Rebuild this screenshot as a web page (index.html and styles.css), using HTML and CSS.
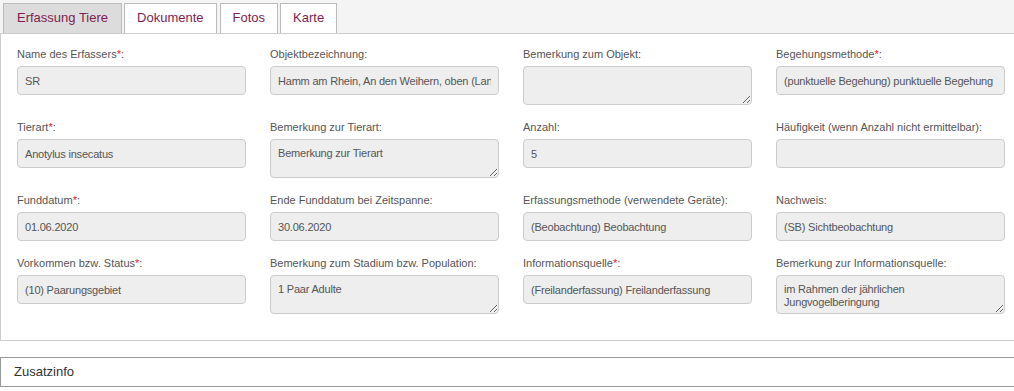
FILE: index.html
```html
<!DOCTYPE html>
<html lang="de">
<head>
    <meta charset="UTF-8">
    <meta name="viewport" content="width=device-width, initial-scale=1.0">
    <title>Erfassung Tiere</title>
    <link rel="stylesheet" href="styles.css">
</head>
<body>
    <div class="tabs">
        <div class="tab active">Erfassung Tiere</div>
        <div class="tab">Dokumente</div>
        <div class="tab tab-wide">Fotos</div>
        <div class="tab">Karte</div>
    </div>

    <div class="panel">
        <form class="grid">
            <div class="field">
                <label>Name des Erfassers<span class="req">*</span>:</label>
                <input type="text" value="SR" readonly>
            </div>
            <div class="field">
                <label>Objektbezeichnung:</label>
                <input type="text" value="Hamm am Rhein, An den Weihern, oben (Landkreis Alzey-Worms)" readonly>
            </div>
            <div class="field">
                <label>Bemerkung zum Objekt:</label>
                <textarea readonly></textarea>
            </div>
            <div class="field">
                <label>Begehungsmethode<span class="req">*</span>:</label>
                <input type="text" value="(punktuelle Begehung) punktuelle Begehung" readonly>
            </div>

            <div class="field">
                <label>Tierart<span class="req">*</span>:</label>
                <input type="text" value="Anotylus insecatus" readonly>
            </div>
            <div class="field">
                <label>Bemerkung zur Tierart:</label>
                <textarea readonly>Bemerkung zur Tierart</textarea>
            </div>
            <div class="field">
                <label>Anzahl:</label>
                <input type="text" value="5" readonly>
            </div>
            <div class="field">
                <label>Häufigkeit (wenn Anzahl nicht ermittelbar):</label>
                <input type="text" value="" readonly>
            </div>

            <div class="field">
                <label>Funddatum<span class="req">*</span>:</label>
                <input type="text" value="01.06.2020" readonly>
            </div>
            <div class="field">
                <label>Ende Funddatum bei Zeitspanne:</label>
                <input type="text" value="30.06.2020" readonly>
            </div>
            <div class="field">
                <label>Erfassungsmethode (verwendete Geräte):</label>
                <input type="text" value="(Beobachtung) Beobachtung" readonly>
            </div>
            <div class="field">
                <label>Nachweis:</label>
                <input type="text" value="(SB) Sichtbeobachtung" readonly>
            </div>

            <div class="field">
                <label>Vorkommen bzw. Status<span class="req">*</span>:</label>
                <input type="text" value="(10) Paarungsgebiet" readonly>
            </div>
            <div class="field">
                <label>Bemerkung zum Stadium bzw. Population:</label>
                <textarea readonly>1 Paar Adulte</textarea>
            </div>
            <div class="field">
                <label>Informationsquelle<span class="req">*</span>:</label>
                <input type="text" value="(Freilanderfassung) Freilanderfassung" readonly>
            </div>
            <div class="field">
                <label>Bemerkung zur Informationsquelle:</label>
                <textarea readonly>im Rahmen der jährlichen Jungvogelberingung</textarea>
            </div>
        </form>
    </div>

    <div class="section">Zusatzinfo</div>
</body>
</html>
```

FILE: styles.css
```css
body {
    margin: 0;
    font-family: "Liberation Sans", Arial, sans-serif;
    background: #fff;
}
.tabs {
    display: flex;
    gap: 2px;
    padding: 3px 0 0 3px;
    background: #f4f4f4;
}
.tab {
    height: 29px;
    line-height: 28px;
    padding: 0 12px;
    font-size: 13px;
    color: #7f1d4f;
    background: #fff;
    border: 1px solid #bbb;
    border-bottom: none;
}
.tab.active {
    padding: 0 13px;
    background: #dcdcdc;
}
.tab-wide {
    margin-left: 1px;
}
.panel {
    border: 1px solid #ccc;
    border-right: none;
    padding: 13px 0 26px 16px;
}
.grid {
    display: grid;
    grid-template-columns: repeat(4, 229px);
    column-gap: 24px;
    row-gap: 15px;
    margin: 0;
}
.field {
    display: flex;
    flex-direction: column;
}
.field label {
    font-size: 11px;
    line-height: 15px;
    color: #555;
    margin-bottom: 4px;
    white-space: nowrap;
}
.req {
    color: #e8202a;
}
.field input,
.field textarea {
    box-sizing: border-box;
    width: 229px;
    margin: 0;
    font-family: "Liberation Sans", Arial, sans-serif;
    font-size: 11px;
    letter-spacing: -0.2px;
    color: #555;
    background: #eee;
    border: 1px solid #ccc;
    border-radius: 4px;
    outline: none;
}
.field input {
    height: 29px;
    padding: 0 7px;
}
.field textarea {
    height: 39px;
    padding: 7px 7px 0;
    line-height: 13px;
    resize: vertical;
    overflow: hidden;
}
.section {
    margin-top: 16px;
    height: 28px;
    line-height: 28px;
    padding-left: 13px;
    font-size: 13px;
    color: #333;
    border: 1px solid #999;
    border-right: none;
}
```
